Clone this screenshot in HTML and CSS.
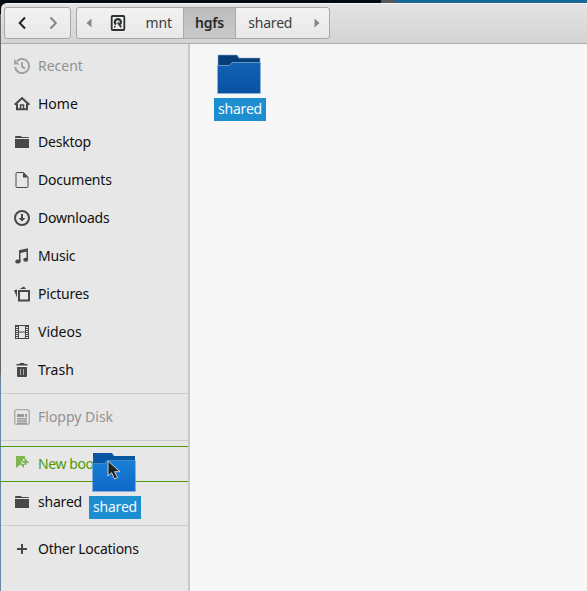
FILE: index.html
```html
<!DOCTYPE html>
<html lang="en">
<head>
<meta charset="utf-8">
<title>hgfs</title>
<link rel="stylesheet" href="styles.css">
</head>
<body>
<svg class="defs" width="0" height="0" aria-hidden="true">
  <defs>
    <linearGradient id="blue" x2="0" y2="1"><stop stop-color="#1263b4"/><stop offset="1" stop-color="#0950a3"/></linearGradient>
    <linearGradient id="bright" x2="0" y2="1"><stop stop-color="#1880d5"/><stop offset="1" stop-color="#0f68c8"/></linearGradient>
    <symbol id="folder-small" viewBox="0 0 16 16"><path d="M1 4V3q0-1 1-1h4.500q.7 0 1 .5l.4.500H14q1 0 1 1zM1 5h14v9H1z"/></symbol>
  </defs>
</svg>
<div class="window">
  <header class="toolbar">
    <div class="group nav">
      <span class="step"><svg width="16" height="16" fill="none" stroke="#222" stroke-width="2"><path d="M10 2.500L4.700 8l5.300 5.500"/></svg></span>
      <span class="step"><svg width="16" height="16" fill="none" stroke="#858585" stroke-width="2"><path d="M4.500 2.500L9.800 8l-5.300 5.500"/></svg></span>
    </div>
    <div class="group path">
      <span class="arrow"><svg width="6" height="10" fill="#858888"><path d="M5.500 .5v9L.5 5z"/></svg></span>
      <span class="disk"><svg width="16" height="16" viewBox="0 0 16 16"><rect x="1.700" y="1" width="12.600" height="14" rx="1" fill="none" stroke="#2e3131" stroke-width="1.800"/><path d="M6 9.500A3 3 0 1 1 10 9.200" fill="none" stroke="#2e3131" stroke-width="2.300"/><path d="M7.800 7.500l3.400 4.700" stroke="#2e3131" stroke-width="1.800"/><path d="M4 11h1.500v1.500H4z" fill="#2e3131"/></svg></span>
      <span class="crumb mnt">mnt</span>
      <span class="crumb current">hgfs</span>
      <span class="crumb child">shared</span>
      <span class="arrow end"><svg width="6" height="10" fill="#858888"><path d="M.5 .5v9L5.500 5z"/></svg></span>
    </div>
  </header>
  <div class="body">
    <nav class="sidebar">
      <div class="row muted recent"><svg class="icon" viewBox="0 0 16 16"><path d="M3 3.200A7 7 0 1 1 1.100 9" fill="none" stroke="currentColor" stroke-width="2"/><path d="M0 1v5.500h5.500z" fill="currentColor"/><path d="M8 4v4.400l3 2.200" fill="none" stroke="currentColor" stroke-width="2"/></svg><span>Recent</span></div>
      <div class="row"><svg class="icon" viewBox="0 0 16 16"><path d="M.6 8.700L8 2.200l7.400 6.500" fill="none" stroke="currentColor" stroke-width="2"/><path d="M3 7.500v5.700h10V7.500" fill="none" stroke="currentColor" stroke-width="2"/><path d="M6.500 13V9h3v4" fill="none" stroke="currentColor" stroke-width="1.500"/></svg><span>Home</span></div>
      <div class="row"><svg class="icon"><use href="#folder-small"/></svg><span class="tight">Desktop</span></div>
      <div class="row"><svg class="icon" viewBox="0 0 16 16"><path d="M3 .5h6.500L14 5v9.500q0 1-1 1H3q-1 0-1-1v-13q0-1 1-1z" fill="none" stroke="currentColor"/><path d="M9 .5V5.500h5z" fill="currentColor"/></svg><span class="tight">Documents</span></div>
      <div class="row"><svg class="icon" viewBox="0 0 16 16"><circle cx="8" cy="8" r="7" fill="none" stroke="currentColor" stroke-width="2"/><path d="M7 4h2v4h2.500L8 11.500 4.500 8H7z" fill="currentColor"/></svg><span class="tight">Downloads</span></div>
      <div class="row"><svg class="icon" viewBox="0 0 16 16"><path d="M5 2.200L14 .3v3L6.500 4.900v8.400H5z" fill="currentColor"/><path d="M12.500 2H14v10h-1.500z" fill="currentColor"/><ellipse cx="4" cy="13.500" rx="2.700" ry="2.100" fill="currentColor"/><ellipse cx="11.700" cy="11.800" rx="2.500" ry="2" fill="currentColor"/></svg><span class="tight">Music</span></div>
      <div class="row"><svg class="icon" viewBox="0 0 16 16"><rect x="5" y="5" width="10" height="9.500" fill="none" stroke="currentColor" stroke-width="2"/><path d="M5.500 3L10 .4l2 2.600zM0 4.200l3-.7v8z" fill="currentColor"/></svg><span class="tight">Pictures</span></div>
      <div class="row"><svg class="icon" viewBox="0 0 16 16"><path d="M1.500 1v14M14.500 1v14M1 1.500h14M1 14.500h14M4.500 1v14M11.500 1v14M4.500 8h7" stroke="currentColor"/><path d="M3 2v13M13 2v13" stroke="currentColor" stroke-width="2" stroke-dasharray="1 1"/></svg><span>Videos</span></div>
      <div class="row"><svg class="icon" viewBox="0 0 16 16"><path d="M2.500 3.500V2H5.500L6 1h4l.5 1h3v1.500zM3 5h10v9q0 1-1 1H4q-1 0-1-1z" fill="currentColor"/><path d="M6.500 7v6M9.500 7v6" stroke="#aaa"/></svg><span>Trash</span></div>
      <div class="rule"></div>
      <div class="row muted"><svg class="icon" viewBox="0 0 16 16"><rect x=".7" y=".7" width="14.600" height="14.600" rx="2" fill="none" stroke="#aaa" stroke-width="1.300"/><path d="M3 5h7v3H3zM11 5h2v3h-2zM3 9h10v1.400H3zM3 11.300h10v1.400H3zM3 13.500h10V15H3z" fill="currentColor"/></svg><span>Floppy Disk</span></div>
      <div class="rule"></div>
      <div class="row bookmark"><svg class="icon" viewBox="0 0 16 16"><path d="M2 0h9v3H9v2H7.500v3H10v4L6.500 8.500 2 12z" fill="#7fb450"/><path d="M11.500 3v6M8.500 6h6" stroke="#7fb450" stroke-width="2"/></svg><span>New bookmark</span></div>
      <div class="row"><svg class="icon"><use href="#folder-small"/></svg><span class="tight">shared</span></div>
      <div class="rule"></div>
      <div class="row"><svg class="icon" viewBox="0 0 16 16"><path d="M8 3v10M3 8h10" stroke="currentColor" stroke-width="2"/></svg><span class="tighter">Other Locations</span></div>
    </nav>
    <main class="files">
      <div class="item">
        <svg class="folder" width="44" height="40"><path d="M1 13V1h19l2 3h21v10z" fill="#073d79" stroke="#8caed0" stroke-width=".6"/><path d="M.5 11.500H12q1 0 1.500-1.200L15 8.500h28.500v31H.5z" fill="url(#blue)" stroke="#8db5df" stroke-width=".7"/></svg>
        <span class="label">shared</span>
      </div>
    </main>
  </div>
  <div class="item dragged">
    <svg class="folder" width="44" height="40"><path d="M1 13V1h19l2 3h21v10z" fill="#0956a2"/><path d="M.5 11.500H12q1 0 1.500-1.200L15 8.500h28.500v31H.5z" fill="url(#bright)" stroke="#8db5df" stroke-width=".4"/></svg>
    <span class="label">shared</span>
    <svg class="pointer" width="14" height="20"><path d="M1 1v15l3.600-3.300L7.500 19l3-1.500-2.900-5.800H13z" fill="#202326" stroke="#c9d1d7"/></svg>
  </div>
</div>
</body>
</html>
```

FILE: styles.css
```css
* { box-sizing: border-box; }
body {
  margin: 0;
  height: 591px;
  padding-top: 3px;
  overflow: hidden;
  background: linear-gradient(90deg, #030b12 381px, #55585a 381px 396px, #176797 396px) top / 100% 14px no-repeat, linear-gradient(#666 370px, #6688a4 380px);
  font: 14px/18px "Noto Sans", sans-serif;
  color: #111;
}
svg { display: block; flex: none; }
.defs { position: absolute; }
.window { position: relative; margin-left: 1px; height: 588px; }
.toolbar {
  display: flex;
  gap: 6px;
  height: 41px;
  padding: 4px 3px 0;
  border-top: 1px solid #f5f5f5;
  border-bottom: 1px solid #aaa;
  border-radius: 6px 0 0 0;
  background: linear-gradient(#e3e3e3, #d4d4d4);
}
.group {
  display: flex;
  height: 32px;
  margin-top: -1px;
  border: 1px solid #a8a8a8;
  border-radius: 3px;
  background: linear-gradient(#f2f2f2, #e8e8e8);
}
.nav { width: 67px; padding-left: 2px; }
.step { width: 31px; display: grid; place-items: center; }
.path { width: 254px; margin-left: -1px; color: #3a3d3d; }
.arrow { width: 24px; display: grid; place-items: center; }
.end { width: 25px; }
.disk { width: 34px; display: grid; place-items: center; }
.crumb { display: grid; place-items: center; letter-spacing: -.2px; }
.mnt { width: 48px; }
.current { width: 54px; border: solid #a9a9a9; border-width: 0 1px; background: linear-gradient(#bdbdbd, #c9c9c9); font-weight: 600; color: #272a2a; }
.child { width: 68px; }
.body { display: flex; height: 547px; }
.sidebar { width: 189px; padding-top: 3px; border-right: 2px solid #c9c9c9; background: #e7e7e7; }
.row { display: flex; align-items: center; gap: 8px; height: 38px; padding-left: 13px; white-space: nowrap; }
.icon { width: 16px; height: 16px; color: #484848; fill: #484848; }
.muted { color: #929292; }
.muted .icon { color: #999; }
.recent .icon { color: #a2a2a2; }
.tight { letter-spacing: -.2px; }
.tighter { letter-spacing: -.28px; }
.rule { height: 1px; margin: 4px 0; background: #cdcdcd; }
.bookmark { height: 36px; margin: 5px 0 1px -1px; padding-left: 14px; border: solid #4e9a06; border-width: 1px 0; color: #4e9a06; letter-spacing: -.4px; }
.files { flex: 1; padding: 10px 0 0 24px; background: #f7f7f7; }
.item { display: flex; flex-direction: column; align-items: center; width: 52px; gap: 4px; }
.folder { margin-right: 2px; }
.label { width: 52px; height: 23px; background: #1d8fd1; color: #f4faff; line-height: 22px; text-align: center; letter-spacing: -.2px; }
.dragged { position: absolute; left: 88px; top: 449px; }
.pointer { position: absolute; left: 18px; top: 8px; }
```
